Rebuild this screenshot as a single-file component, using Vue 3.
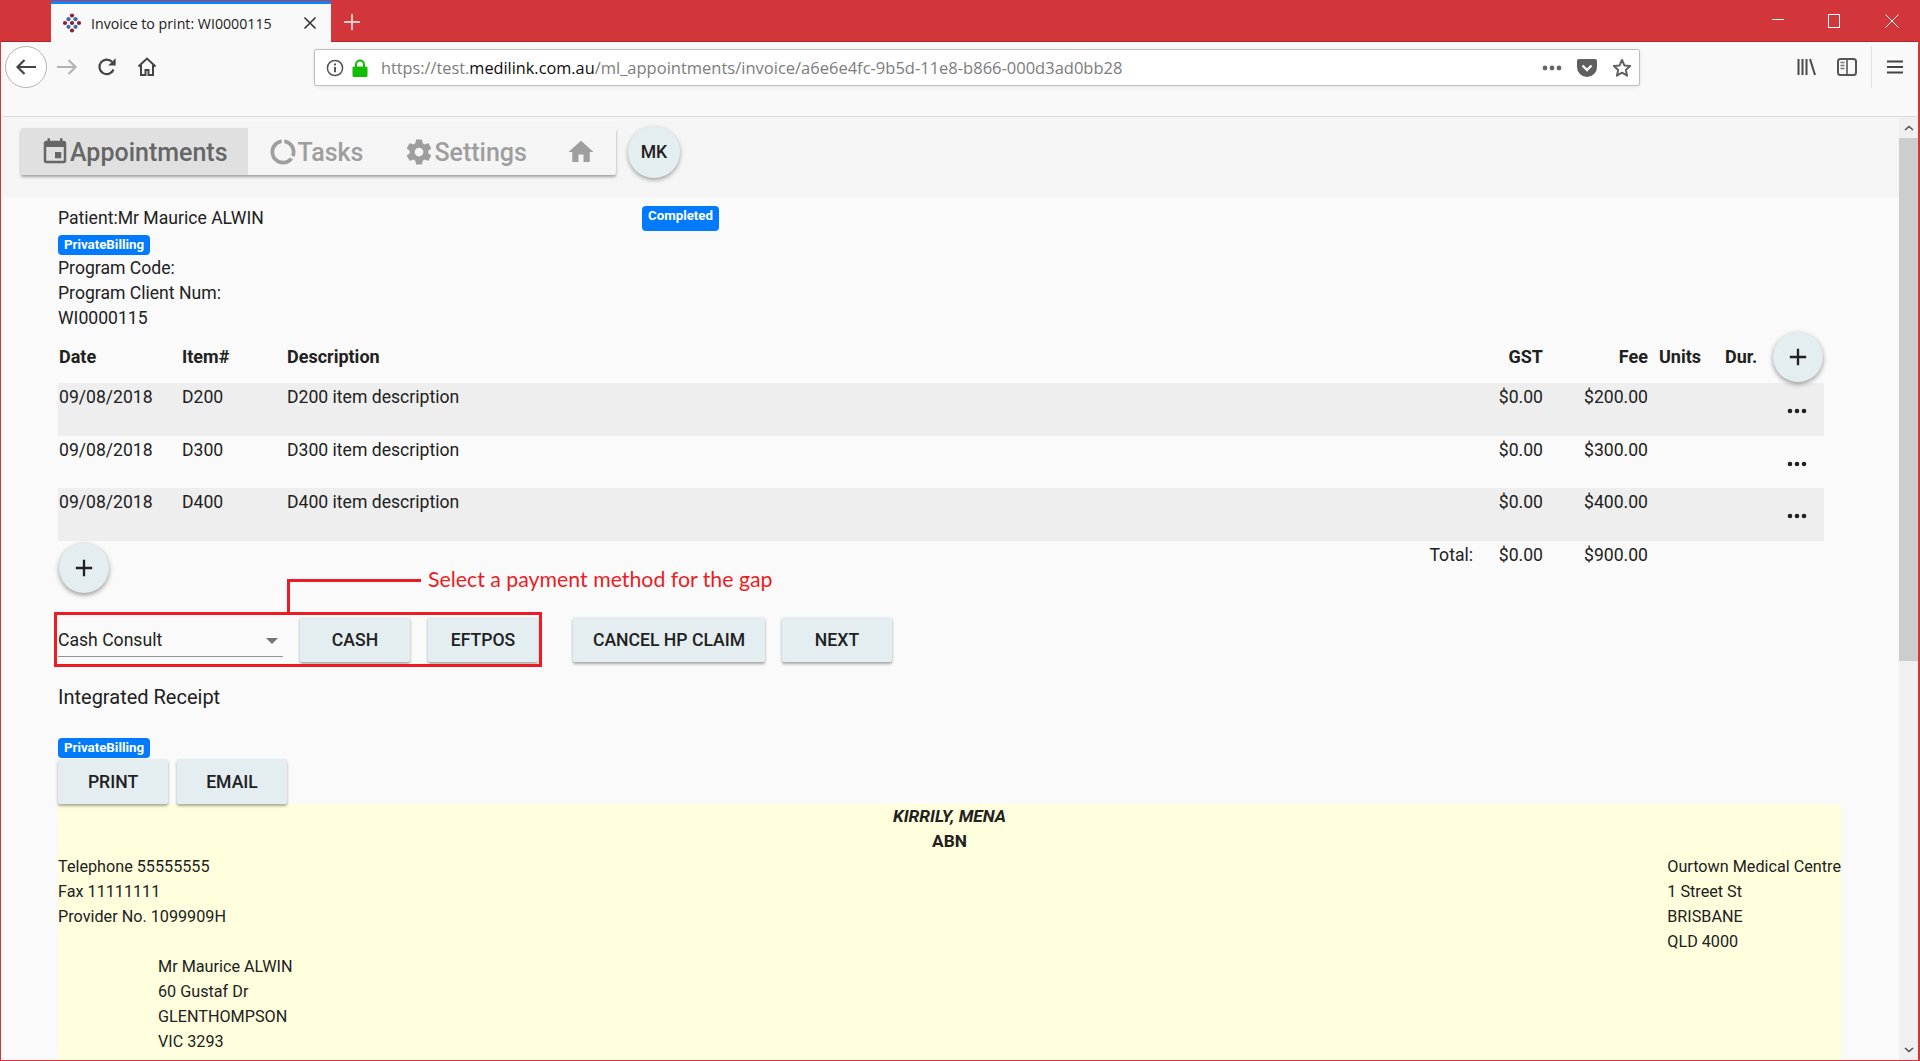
<template>
  <div class="window">
    <!-- title bar -->
    <div class="titlebar">
      <div class="tab">
        <svg class="favicon" viewBox="0 0 20 20" width="20" height="20">
          <circle v-for="(d, i) in faviconDots" :key="i" :cx="d[0]" :cy="d[1]" r="2.1" :fill="d[2]" />
        </svg>
        <span class="tab-title">Invoice to print: WI0000115</span>
        <svg class="tab-close" viewBox="0 0 14 14" width="14" height="14">
          <path d="M1.5 1.5l11 11M12.5 1.5l-11 11" stroke="#333" stroke-width="1.6" fill="none" />
        </svg>
      </div>
      <svg class="new-tab" viewBox="0 0 18 18" width="18" height="18">
        <path d="M9 1v16M1 9h16" stroke="#f3c6c8" stroke-width="2" fill="none" />
      </svg>
      <div class="win-controls">
        <svg viewBox="0 0 12 14" width="12" height="14"><path d="M0 5.5h12" stroke="#fff" fill="none" /></svg>
        <svg viewBox="0 0 13 14" width="13" height="14"><rect x="0.5" y="0.5" width="11" height="13" stroke="#fff" fill="none" /></svg>
        <svg viewBox="0 0 14 14" width="14" height="14"><path d="M.5.5l13 13M13.5.5l-13 13" stroke="#fff" fill="none" /></svg>
      </div>
    </div>

    <!-- browser toolbar -->
    <div class="toolbar">
      <div class="back-btn">
        <svg viewBox="0 0 22 18" width="22" height="18">
          <path d="M21 9H3M9.5 2L2.5 9l7 7" stroke="#444" stroke-width="2.2" fill="none" />
        </svg>
      </div>
      <svg class="fwd" viewBox="0 0 22 18" width="22" height="18">
        <path d="M1 9h18M12.5 2l7 7-7 7" stroke="#b4b4b4" stroke-width="2.2" fill="none" />
      </svg>
      <svg class="reload" viewBox="0 0 20 20" width="20" height="20">
        <path d="M16.5 12.5A7.3 7.3 0 1 1 15 4.8" stroke="#444" stroke-width="2.2" fill="none" />
        <path d="M18.6 1.2v7.4h-7.4z" fill="#444" />
      </svg>
      <svg class="home-out" viewBox="0 0 20 20" width="20" height="20">
        <path d="M1.5 9.5L10 1.6l8.5 7.9M4 8v10h4.5v-5h3v5H16V8" stroke="#444" stroke-width="2" fill="none" />
      </svg>
      <div class="urlbar">
        <svg class="info" viewBox="0 0 18 18" width="18" height="18">
          <circle cx="9" cy="9" r="7.6" stroke="#555" stroke-width="1.5" fill="none" />
          <path d="M9 8v5.2M9 4.6v1.8" stroke="#555" stroke-width="2" fill="none" />
        </svg>
        <svg class="lock" viewBox="0 0 16 18" width="16" height="18">
          <path d="M4 8V5.5a4 4 0 0 1 8 0V8" stroke="#12bc00" stroke-width="2" fill="none" />
          <rect x="0.5" y="7.5" width="15" height="10.5" rx="1.5" fill="#12bc00" />
        </svg>
        <span class="url"><span class="url-dim">https://test.</span>medilink.com.au<span class="url-dim url-path">/ml_appointments/invoice/a6e6e4fc-9b5d-11e8-b866-000d3ad0bb28</span></span>
        <svg class="dots-h" viewBox="0 0 20 6" width="20" height="6">
          <circle cx="3" cy="3" r="2.4" fill="#666" /><circle cx="10" cy="3" r="2.4" fill="#666" /><circle cx="17" cy="3" r="2.4" fill="#666" />
        </svg>
        <svg class="pocket" viewBox="0 0 20 18" width="20" height="18">
          <path d="M2 0h16a2 2 0 0 1 2 2v6a10 10 0 0 1-20 0V2a2 2 0 0 1 2-2z" fill="#5f5f5f" />
          <path d="M5.5 6.5L10 11l4.5-4.5" stroke="#fff" stroke-width="2.4" fill="none" />
        </svg>
        <svg class="star" viewBox="0 0 20 20" width="20" height="20">
          <path d="M10 2l2.4 5.4 5.8.6-4.4 3.9 1.3 5.8L10 14.7l-5.1 3 1.3-5.8L1.8 8l5.8-.6z" stroke="#5f5f5f" stroke-width="2" stroke-linejoin="round" fill="none" />
        </svg>
      </div>
      <svg class="library" viewBox="0 0 20 18" width="20" height="18">
        <path d="M1.5 1v16M5.5 1v16M9.5 1v16M13 1l5 16" stroke="#4a4a4a" stroke-width="2" fill="none" />
      </svg>
      <svg class="sidebar" viewBox="0 0 20 18" width="20" height="18">
        <rect x="1" y="1" width="18" height="16" rx="2.5" stroke="#555" stroke-width="2" fill="none" />
        <path d="M10 1v16" stroke="#555" stroke-width="1.6" />
        <path d="M3.5 4.5h4M3.5 7.5h4M3.5 10.5h4" stroke="#777" stroke-width="1.6" />
      </svg>
      <div class="tool-sep"></div>
      <svg class="burger" viewBox="0 0 16 14" width="16" height="14">
        <path d="M0 1.5h16M0 7h16M0 12.5h16" stroke="#444" stroke-width="2" fill="none" />
      </svg>
    </div>

    <!-- page + scrollbar -->
    <div class="viewport">
      <div class="page">
        <div class="topnav">
          <div class="nav-bar">
            <div class="nav-item active">
              <svg viewBox="0 0 24 24" width="30" height="30"><path d="M17 12h-5v5h5v-5zM16 1v2H8V1H6v2H5c-1.11 0-1.99.9-1.99 2L3 19c0 1.1.89 2 2 2h14c1.1 0 2-.9 2-2V5c0-1.1-.9-2-2-2h-1V1h-2zm3 18H5V8h14v11z" /></svg>
              <span>Appointments</span>
            </div>
            <div class="nav-item nav-tasks">
              <svg viewBox="0 0 24 24" width="30" height="30"><path d="M13 2.05v3.03c3.39.49 6 3.39 6 6.92 0 .9-.18 1.75-.48 2.54l2.6 1.53c.56-1.24.88-2.62.88-4.07 0-5.18-3.95-9.45-9-9.95zM12 19c-3.87 0-7-3.13-7-7 0-3.53 2.61-6.43 6-6.92V2.05c-5.06.5-9 4.76-9 9.95 0 5.52 4.47 10 9.99 10 3.31 0 6.24-1.61 8.06-4.09l-2.6-1.53C16.17 17.98 14.21 19 12 19z" /></svg>
              <span>Tasks</span>
            </div>
            <div class="nav-item nav-settings">
              <svg viewBox="0 0 24 24" width="30" height="30"><path d="M19.43 12.98c.04-.32.07-.64.07-.98s-.03-.66-.07-.98l2.11-1.65c.19-.15.24-.42.12-.64l-2-3.46c-.12-.22-.39-.3-.61-.22l-2.49 1c-.52-.4-1.08-.73-1.69-.98l-.38-2.65C14.46 2.18 14.25 2 14 2h-4c-.25 0-.46.18-.49.42l-.38 2.65c-.61.25-1.17.59-1.69.98l-2.49-1c-.23-.09-.49 0-.61.22l-2 3.46c-.13.22-.07.49.12.64l2.11 1.65c-.04.32-.07.65-.07.98s.03.66.07.98l-2.11 1.65c-.19.15-.24.42-.12.64l2 3.46c.12.22.39.3.61.22l2.49-1c.52.4 1.08.73 1.69.98l.38 2.65c.03.24.24.42.49.42h4c.25 0 .46-.18.49-.42l.38-2.65c.61-.25 1.17-.59 1.69-.98l2.49 1c.23.09.49 0 .61-.22l2-3.46c.12-.22.07-.49-.12-.64l-2.11-1.65zM12 15.5c-1.93 0-3.5-1.57-3.5-3.5s1.57-3.5 3.5-3.5 3.5 1.57 3.5 3.5-1.57 3.5-3.5 3.5z" /></svg>
              <span>Settings</span>
            </div>
            <div class="nav-item">
              <svg viewBox="0 0 24 24" width="30" height="30"><path d="M10 20v-6h4v6h5v-8h3L12 3 2 12h3v8z" /></svg>
            </div>
          </div>
          <div class="avatar">MK</div>
        </div>

        <div class="content">
          <div class="patient-row">
            <span class="patient">Patient:Mr Maurice ALWIN</span>
            <span class="badge badge-status">Completed</span>
          </div>
          <div class="badge-line"><span class="badge">PrivateBilling</span></div>
          <div>Program Code:</div>
          <div>Program Client Num:</div>
          <div>WI0000115</div>

          <div class="grid grid-head">
            <span>Date</span>
            <span>Item#</span>
            <span>Description</span>
            <span class="num">GST</span>
            <span class="num">Fee</span>
            <span class="units">Units</span>
            <span>Dur.</span>
            <button class="fab">
              <svg viewBox="0 0 24 24" width="28" height="28"><path d="M19 13h-6v6h-2v-6H5v-2h6V5h2v6h6v2z" /></svg>
            </button>
          </div>
          <div v-for="(row, i) in rows" :key="row.item" class="grid grid-row" :class="{ shaded: i % 2 === 0 }">
            <span>{{ row.date }}</span>
            <span>{{ row.item }}</span>
            <span>{{ row.item }} item description</span>
            <span class="num">$0.00</span>
            <span class="num">{{ row.fee }}</span>
            <span></span>
            <span></span>
            <svg class="more" viewBox="0 0 20 6" width="20" height="6">
              <circle cx="3" cy="3" r="2.3" /><circle cx="10" cy="3" r="2.3" /><circle cx="17" cy="3" r="2.3" />
            </svg>
          </div>
          <div class="grid grid-total">
            <button class="fab fab-add">
              <svg viewBox="0 0 24 24" width="28" height="28"><path d="M19 13h-6v6h-2v-6H5v-2h6V5h2v6h6v2z" /></svg>
            </button>
            <span></span>
            <span class="num total-label">Total:</span>
            <span class="num">$0.00</span>
            <span class="num">$900.00</span>
          </div>

          <div class="payment-row">
            <div class="select">
              <span>Cash Consult</span>
              <span class="select-arrow"></span>
            </div>
            <button class="btn">CASH</button>
            <button class="btn eftpos">EFTPOS</button>
            <button class="btn cancel">CANCEL HP CLAIM</button>
            <button class="btn next">NEXT</button>

            <!-- red annotation added over the screenshot -->
            <div class="note-box"></div>
            <div class="note-line"></div>
            <span class="note-text">Select a payment method for the gap</span>
          </div>

          <div class="receipt-title">Integrated Receipt</div>
          <div class="badge-line2"><span class="badge">PrivateBilling</span></div>
          <div class="print-row">
            <button class="btn">PRINT</button>
            <button class="btn">EMAIL</button>
          </div>

          <div class="receipt">
            <div class="receipt-name">KIRRILY, MENA</div>
            <div class="receipt-abn">ABN</div>
            <div class="receipt-cols">
              <div>
                <div>Telephone 55555555</div>
                <div>Fax 11111111</div>
                <div>Provider No. 1099909H</div>
              </div>
              <div>
                <div>Ourtown Medical Centre</div>
                <div>1 Street St</div>
                <div>BRISBANE</div>
                <div>QLD 4000</div>
              </div>
            </div>
            <div class="receipt-addr">
              <div>Mr Maurice ALWIN</div>
              <div>60 Gustaf Dr</div>
              <div>GLENTHOMPSON</div>
              <div>VIC 3293</div>
            </div>
          </div>
        </div>
      </div>

      <div class="scrollbar">
        <div class="scroll-btn">
          <svg viewBox="0 0 10 6" width="10" height="6"><path d="M1 5l4-3.5L9 5" stroke="#505050" stroke-width="1.6" fill="none" /></svg>
        </div>
        <div class="scroll-thumb"></div>
        <div class="scroll-track"></div>
        <div class="scroll-btn">
          <svg viewBox="0 0 10 6" width="10" height="6"><path d="M1 1l4 3.5L9 1" stroke="#505050" stroke-width="1.6" fill="none" /></svg>
        </div>
      </div>
    </div>
  </div>
</template>

<script setup>
const rows = [
  { date: '09/08/2018', item: 'D200', fee: '$200.00' },
  { date: '09/08/2018', item: 'D300', fee: '$300.00' },
  { date: '09/08/2018', item: 'D400', fee: '$400.00' }
]

// diamond shaped favicon: wine dots on the points and centre, blue between them
const blue = '#3b6ea5'
const wine = '#8e1c3c'
const faviconDots = [
  [10, 2.5, wine], [3, 10, wine], [17, 10, wine], [10, 17.5, wine], [10, 10, wine],
  [6.5, 6.2, blue], [13.5, 6.2, blue], [6.5, 13.8, blue], [13.5, 13.8, blue]
]
</script>

<style>
html,
body {
  margin: 0;
  overflow: hidden;
}
</style>

<style scoped>
.window {
  height: 1061px;
  width: 1920px;
  box-sizing: border-box;
  border-left: 1px solid #d2353a;
  border-right: 2px solid #d2353a;
  border-bottom: 1px solid #d2353a;
  display: flex;
  flex-direction: column;
  overflow: hidden;
  font-family: Roboto, sans-serif;
  font-size: 17.6px;
  line-height: 25px;
  color: #212121;
}

.titlebar {
  height: 41px;
  flex: none;
  background: #d2353a;
  border-bottom: 1px solid #b5232a;
  display: flex;
  align-items: flex-start;
  margin: 0 -2px 0 -1px;
}
.tab {
  width: 280px;
  height: 38px;
  margin: 1px 0 0 51px;
  border-top: 3px solid #0a84ff;
  background: #f9f9f9;
  display: flex;
  align-items: center;
  font-family: "Open Sans", sans-serif;
  font-size: 14.2px;
}
.favicon {
  margin-left: 11px;
}
.tab-title {
  margin-left: 9px;
  width: 212px;
  color: #222;
  white-space: nowrap;
}
.tab-close {
  flex: none;
}
.new-tab {
  margin: 13px 0 0 12px;
}
.win-controls {
  margin-left: auto;
  height: 41px;
  display: flex;
  align-items: center;
  gap: 44px;
  padding-right: 21px;
}

.toolbar {
  height: 75px;
  flex: none;
  box-sizing: border-box;
  background: #f9f9f9;
  border-bottom: 1px solid #dcdcdc;
  display: flex;
  align-items: flex-start;
  padding: 4px 0 0 4px;
}
.back-btn {
  width: 40px;
  height: 40px;
  border: 1px solid #b5b5b5;
  border-radius: 50%;
  background: #fff;
  display: flex;
  align-items: center;
  justify-content: center;
  flex: none;
}
.fwd {
  margin: 12px 0 0 9px;
}
.reload {
  margin: 11px 0 0 19px;
}
.home-out {
  margin: 11px 0 0 20px;
}
.urlbar {
  width: 1326px;
  height: 37px;
  margin: 3px 0 0 157px;
  box-sizing: border-box;
  background: #fff;
  border: 1px solid #bebebe;
  border-radius: 2px;
  box-shadow: 0 1px 4px rgba(0, 0, 0, 0.08);
  display: flex;
  align-items: center;
  padding-left: 11px;
  flex: none;
  font-family: "Open Sans", sans-serif;
  font-size: 16.3px;
}
.lock {
  margin-left: 8px;
}
.url {
  margin-left: 13px;
  width: 1161px;
  white-space: nowrap;
  color: #0c0c0d;
  flex: none;
}
.url-dim {
  color: #7c7c7d;
}
.url-path {
  font-size: 16.5px;
}
.pocket {
  margin-left: 15px;
  flex: none;
}
.star {
  margin-left: 15px;
  flex: none;
}
.dots-h {
  flex: none;
}
.library {
  margin: 12px 0 0 157px;
}
.sidebar {
  margin: 12px 0 0 20px;
}
.tool-sep {
  width: 1px;
  height: 42px;
  background: #e2e2e2;
  margin: 0 0 0 14px;
}
.burger {
  margin: 14px 0 0 15px;
}

.viewport {
  flex: 1;
  min-height: 0;
  display: flex;
}
.page {
  flex: 1;
  min-width: 0;
  overflow: hidden;
  background: #fafafa;
}
.topnav {
  height: 80px;
  box-sizing: border-box;
  background: #f5f5f5;
  display: flex;
  align-items: flex-start;
  padding: 11px 0 0 20px;
}
.nav-bar {
  height: 47px;
  display: flex;
  background: #f5f5f5;
  border-radius: 2px;
  box-shadow: 0 2px 3px rgba(0, 0, 0, 0.35);
  overflow: hidden;
}
.nav-item {
  display: flex;
  align-items: center;
  padding: 1px 20px 0 19px;
  font-size: 25px;
  font-weight: 500;
  color: #9e9e9e;
}
.nav-item svg {
  fill: #9e9e9e;
}
.nav-tasks {
  padding: 1px 21px 0 20px;
}
.nav-settings {
  padding: 1px 20px 0 20px;
}
.nav-item.active {
  background: #e0e0e0;
  color: #666;
}
.nav-item.active svg {
  fill: #666;
}
.avatar {
  width: 52px;
  height: 52px;
  margin: -2px 0 0 12px;
  border-radius: 50%;
  background: #e4edf0;
  box-shadow: 0 2px 4px rgba(0, 0, 0, 0.35);
  display: flex;
  align-items: center;
  justify-content: center;
  font-weight: 500;
  font-size: 17.6px;
}

.content {
  padding: 9px 58px 0 57px;
}
.patient-row {
  display: flex;
  height: 25px;
}
.patient {
  width: 584px;
}
.badge {
  display: inline-block;
  height: 20px;
  padding: 0 6px;
  box-sizing: border-box;
  background: #007bff;
  color: #fff;
  border-radius: 4px;
  font-size: 13.3px;
  font-weight: 700;
  line-height: 20px;
  vertical-align: top;
}
.badge-status {
  height: 25px;
  width: 77px;
  padding: 0;
  text-align: center;
  line-height: 20px;
}
.badge-line {
  height: 25px;
  padding-top: 4px;
  box-sizing: border-box;
}
.badge-line .badge,
.badge-line2 .badge {
  width: 92px;
  padding: 0;
  text-align: center;
}

.grid {
  display: grid;
  grid-template-columns: 123px 105px 1189px 70px 105px 74px 46px 54px;
  width: 1766px;
}
.grid > span {
  padding: 0 2px 0 1px;
}
.grid .num {
  text-align: right;
}
.grid-head {
  height: 52px;
  align-items: center;
  font-size: 18px;
  font-weight: 700;
}
.grid-head > span {
  padding-bottom: 2px;
}
.grid-head > .units {
  padding-left: 9px;
}
.grid-row {
  height: 52.67px;
  padding-top: 2px;
  box-sizing: border-box;
  align-items: start;
}
.shaded {
  background: #eee;
}
.more {
  fill: #212121;
  margin: 23px 0 0 17px;
}
.fab {
  width: 50px;
  height: 50px;
  padding: 0;
  border: none;
  border-radius: 50%;
  background: #e4edf0;
  box-shadow: 0 2px 5px rgba(0, 0, 0, 0.4);
  display: flex;
  align-items: center;
  justify-content: center;
  margin-left: 3px;
}
.fab svg {
  fill: #212121;
}
.grid-total {
  height: 76px;
  padding-top: 2px;
  box-sizing: border-box;
  align-items: start;
}
.fab-add {
  margin: 0 0 0 1px;
}
.grid-total > .total-label {
  grid-column: 3;
}

.payment-row {
  position: relative;
  display: flex;
  height: 45px;
  width: 840px;
}
.select {
  width: 225px;
  height: 40px;
  box-sizing: border-box;
  border-bottom: 1px solid #949494;
  margin-right: 17px;
  padding-top: 11px;
  position: relative;
}
.select-arrow {
  position: absolute;
  right: 5px;
  top: 21px;
  border-left: 6px solid transparent;
  border-right: 6px solid transparent;
  border-top: 6px solid #757575;
}
.btn {
  width: 110px;
  height: 45px;
  padding: 2px 0 0;
  border: none;
  border-radius: 2px;
  background: #e4edf0;
  box-shadow: 0 2px 3px rgba(0, 0, 0, 0.35);
  color: #212121;
  font-family: Roboto, sans-serif;
  font-size: 17.6px;
  font-weight: 500;
  flex: none;
}
.eftpos {
  margin-left: 18px;
}
.cancel {
  width: 192px;
  margin-left: 35px;
}
.next {
  margin-left: 17px;
}
.note-box {
  position: absolute;
  left: -4px;
  top: -5px;
  width: 488px;
  height: 55px;
  box-sizing: border-box;
  border: 3px solid #ed1c24;
}
.note-line {
  position: absolute;
  left: 229px;
  top: -38px;
  width: 134px;
  height: 34px;
  box-sizing: border-box;
  border-left: 3px solid #ed1c24;
  border-top: 3px solid #ed1c24;
}
.note-text {
  position: absolute;
  left: 370px;
  top: -50px;
  color: #ed1c24;
  font-family: Lato, sans-serif;
  font-size: 21.3px;
  white-space: nowrap;
}

.receipt-title {
  margin-top: 23px;
  font-size: 20px;
  height: 25px;
}
.badge-line2 {
  margin-top: 28px;
  height: 20px;
}
.print-row {
  margin-top: 1px;
  display: flex;
  gap: 9px;
}
.receipt {
  width: 1783px;
  height: 260px;
  background: #ffd;
  font-size: 16.2px;
}
.receipt-name {
  text-align: center;
  font-size: 17.3px;
  font-weight: 700;
  font-style: italic;
}
.receipt-abn {
  text-align: center;
  font-size: 17.3px;
  font-weight: 700;
}
.receipt-cols {
  display: flex;
  justify-content: space-between;
}
.receipt-addr {
  padding-left: 100px;
}

.scrollbar {
  width: 19px;
  flex: none;
  background: #f0f0f0;
  display: flex;
  flex-direction: column;
}
.scroll-btn {
  height: 21px;
  flex: none;
  display: flex;
  align-items: center;
  justify-content: center;
}
.scroll-thumb {
  height: 523px;
  flex: none;
  background: #cdcdcd;
}
.scroll-track {
  flex: 1;
}
</style>
